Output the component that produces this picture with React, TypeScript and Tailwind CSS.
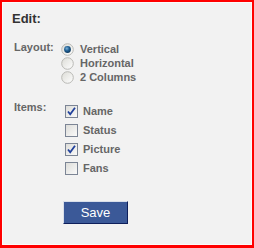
const layouts = [
  { label: 'Vertical', checked: true },
  { label: 'Horizontal', checked: false },
  { label: '2 Columns', checked: false },
];

const items = [
  { label: 'Name', checked: true },
  { label: 'Status', checked: false },
  { label: 'Picture', checked: true },
  { label: 'Fans', checked: false },
];

const Radio = ({ checked }: { checked: boolean }) => (
  <svg width="13" height="13" viewBox="0 0 13 13" className="shrink-0">
    <defs>
      <linearGradient id="rg" x1="0" y1="0" x2="1" y2="1">
        <stop offset="0" stopColor="#dcdcd6" />
        <stop offset="1" stopColor="#ffffff" />
      </linearGradient>
      <radialGradient id="dot" cx="0.4" cy="0.35" r="0.7">
        <stop offset="0" stopColor="#7fb2d8" />
        <stop offset="0.5" stopColor="#1f5f93" />
        <stop offset="1" stopColor="#0d3558" />
      </radialGradient>
    </defs>
    <circle cx="6.5" cy="6.5" r="5.8" fill="url(#rg)" stroke="#b9b9b5" strokeWidth="1" />
    {checked && <circle cx="6.5" cy="6.5" r="3.4" fill="url(#dot)" />}
  </svg>
);

const Check = ({ checked }: { checked: boolean }) => (
  <svg width="13" height="13" viewBox="0 0 13 13" className="shrink-0">
    <defs>
      <linearGradient id="cg" x1="0" y1="0" x2="1" y2="1">
        <stop offset="0" stopColor="#dcdcd8" />
        <stop offset="1" stopColor="#fbfbfb" />
      </linearGradient>
    </defs>
    <rect x="0.5" y="0.5" width="12" height="12" fill="url(#cg)" stroke="#7c8595" />
    {checked && (
      <path d="M3 6.5 L5.2 9.2 L10 2.8" fill="none" stroke="#21419c" strokeWidth="1.8" />
    )}
  </svg>
);

export default function App() {
  return (
    <div className="w-[254px] h-[248px] bg-[#f2f2f2] border-t-2 border-l-2 border-r-2 border-b-[3px] border-[#ff0000] font-['Liberation_Sans',Arial,sans-serif]">
      <div className="h-full border border-[#fbfbfb] pl-[9px] pt-[8px]">
        <h2 className="text-[13px] leading-[15px] font-bold text-[#333333]">Edit:</h2>

        <div className="flex mt-[14px]">
          <div className="w-[49px] pl-[2px] text-[11px] leading-[14px] font-bold text-[#666666]">Layout:</div>
          <div className="flex flex-col pt-[2px]">
            {layouts.map((o) => (
              <div key={o.label} className="flex items-center h-[14px]">
                <Radio checked={o.checked} />
                <span className="ml-[6px] text-[11px] font-bold text-[#666666]">{o.label}</span>
              </div>
            ))}
          </div>
        </div>

        <div className="flex mt-[16px]">
          <div className="w-[49px] pl-[2px] text-[11px] leading-[14px] font-bold text-[#666666]">Items:</div>
          <div className="flex flex-col pt-[2px] pl-[4px]">
            {items.map((o) => (
              <div key={o.label} className="flex items-center h-[19px]">
                <Check checked={o.checked} />
                <span className="ml-[5px] text-[11px] font-bold text-[#666666]">{o.label}</span>
              </div>
            ))}
          </div>
        </div>

        <button className="ml-[51px] mt-[23px] w-[65px] h-[23px] bg-[#3b5998] border border-t-[#d9dfea] border-l-[#d9dfea] border-b-[#0e1f5b] border-r-[#0e1f5b] text-white text-[13px] leading-none">
          Save
        </button>
      </div>
    </div>
  );
}
